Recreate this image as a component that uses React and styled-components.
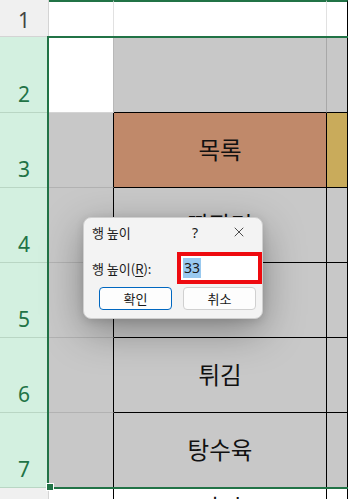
import styled, { createGlobalStyle } from "styled-components";
import { X } from "lucide-react";

const colors = {
  green: "#217346",
  headGray: "#f0f0f0",
  headSel: "#d3f0e0",
  cellGray: "#c8c8c8",
  brown: "#c0896a",
  gold: "#c9ab5b",
  red: "#ee0a0f",
};

const rows = [
  { num: 1, h: 37, sel: false, cells: ["white", "white", "white"] },
  { num: 2, h: 76, sel: true, cells: ["white", "gray", "gray"] },
  { num: 3, h: 75, sel: true, cells: ["gray", "brown", "gold"], text: "목록" },
  { num: 4, h: 75, sel: true, cells: ["gray", "gray", "gray"], text: "짜장면" },
  { num: 5, h: 75, sel: true, cells: ["gray", "gray", "gray"], text: "짬뽕" },
  { num: 6, h: 75, sel: true, cells: ["gray", "gray", "gray"], text: "튀김" },
  { num: 7, h: 75, sel: true, cells: ["gray", "gray", "gray"], text: "탕수육" },
  { num: 8, h: 40, sel: false, cells: ["white", "white", "white"], text: "라면" },
];

const fills = {
  white: "#ffffff",
  gray: colors.cellGray,
  brown: colors.brown,
  gold: colors.gold,
};

export default function App() {
  return (
    <>
      <GlobalStyle />
      <Sheet>
        <Grid $rows={rows.map((r) => `${r.h}px`).join(" ")}>
          {rows.map((r, i) => {
            const boxed = i >= 2;
            return [
              <RowHead key={`h${i}`} $sel={r.sel} $first={i === 0}>
                {r.num}
              </RowHead>,
              <Cell
                key={`a${i}`}
                $bg={fills[r.cells[0]]}
                $top={i === 0}
                $right={boxed ? "#000" : i === 1 ? "#b8b8b8" : "#e1e1e1"}
                $bottom={r.cells[0] === "gray" ? "#b2b2b2" : "#d4d4d4"}
              />,
              <Cell
                key={`b${i}`}
                $bg={fills[r.cells[1]]}
                $top={i === 0}
                $right={boxed ? "#000" : i === 1 ? "#a8a8a8" : "#e1e1e1"}
                $bottom={i >= 1 ? "#000" : "#e1e1e1"}
              >
                {r.text}
              </Cell>,
              <Cell
                key={`c${i}`}
                $bg={fills[r.cells[2]]}
                $top={i === 0}
                $right="#000"
                $bottom={i >= 1 ? "#000" : "#e1e1e1"}
              />,
            ];
          })}
        </Grid>
        <Selection>
          <FillHandle />
        </Selection>

        <Dialog>
          <TitleBar>
            <Title>행 높이</Title>
            <HelpBtn>?</HelpBtn>
            <CloseBtn>
              <X size={16} strokeWidth={1.2} />
            </CloseBtn>
          </TitleBar>
          <FieldRow>
            <Label>
              행 높이(<u>R</u>):
            </Label>
            <RedBox>
              <Input>
                <Selected>33</Selected>
              </Input>
            </RedBox>
          </FieldRow>
          <Buttons>
            <Button $primary>확인</Button>
            <Button>취소</Button>
          </Buttons>
        </Dialog>
      </Sheet>
    </>
  );
}

const GlobalStyle = createGlobalStyle`
  html, body { margin: 0; padding: 0; background: #fff; }
  body {
    font-family: "Noto Sans CJK KR", "Noto Sans", sans-serif;
    width: 348px;
    height: 499px;
    overflow: hidden;
  }
`;

const Sheet = styled.div`
  position: relative;
  width: 348px;
  height: 499px;
  overflow: hidden;
`;

const Grid = styled.div`
  display: grid;
  grid-template-columns: 49px 65px 213px 1fr;
  grid-template-rows: ${(p) => p.$rows};
`;

const RowHead = styled.div`
  box-sizing: border-box;
  display: flex;
  align-items: flex-end;
  justify-content: center;
  padding-bottom: ${(p) => (p.$first ? 4 : 6)}px;
  background: ${(p) => (p.$sel ? colors.headSel : colors.headGray)};
  color: ${(p) => (p.$sel ? colors.green : "#444")};
  border-bottom: 1px solid ${(p) => (p.$sel ? "#b9d6c4" : "#d4d4d4")};
  border-right: 1px solid #d4d4d4;
  font-family: "Noto Sans", "Open Sans", sans-serif;
  font-size: 21px;
  line-height: 24px;
`;

const Cell = styled.div`
  box-sizing: border-box;
  display: flex;
  align-items: center;
  justify-content: center;
  background: ${(p) => p.$bg};
  border-right: 1px solid ${(p) => p.$right};
  border-bottom: 1px solid ${(p) => p.$bottom};
  border-top: ${(p) => (p.$top ? `2px solid ${colors.green}` : "none")};
  font-family: "Noto Sans CJK KR", sans-serif;
  font-size: 23.5px;
  color: #111;
  padding-bottom: 2px;
`;

const Selection = styled.div`
  position: absolute;
  left: 47px;
  top: 36px;
  width: 320px;
  height: 449px;
  border: 2px solid ${colors.green};
  pointer-events: none;
`;

const FillHandle = styled.div`
  position: absolute;
  left: -3px;
  bottom: -4px;
  width: 6px;
  height: 6px;
  background: ${colors.green};
  border: 1px solid #fff;
`;

const Dialog = styled.div`
  position: absolute;
  left: 83px;
  top: 217px;
  width: 180px;
  box-sizing: border-box;
  background: #f3f3f3;
  border: 1px solid #cfcfcf;
  border-radius: 8px;
  box-shadow: 0 12px 40px rgba(0, 0, 0, 0.34), 0 2px 8px rgba(0, 0, 0, 0.12);
  font-family: "Noto Sans CJK KR", sans-serif;
  font-size: 13px;
  color: #1a1a1a;
  padding-bottom: 8px;
`;

const TitleBar = styled.div`
  display: flex;
  align-items: center;
  height: 28px;
  padding: 0 1px 0 8px;
`;

const Title = styled.div`
  flex: 1;
`;

const HelpBtn = styled.div`
  width: 30px;
  text-align: center;
  font-family: "Noto Sans", sans-serif;
  font-size: 14px;
  margin-right: 7px;
`;

const CloseBtn = styled.div`
  width: 44px;
  display: flex;
  justify-content: center;
  color: #222;
`;

const FieldRow = styled.div`
  display: flex;
  align-items: center;
  justify-content: space-between;
  margin-top: 6px;
  padding: 0 0 0 8px;
`;

const Label = styled.div`
  u {
    text-underline-offset: 2px;
  }
`;

const RedBox = styled.div`
  box-sizing: border-box;
  width: 85px;
  height: 32px;
  border: 4px solid ${colors.red};
  background: #fff;
  display: flex;
  align-items: center;
`;

const Input = styled.div`
  flex: 1;
  padding-left: 2px;
  display: flex;
  align-items: center;
`;

const Selected = styled.span`
  background: #99c9ef;
  color: #1a1a1a;
  font-family: "Noto Sans", sans-serif;
  font-size: 14px;
  line-height: 20px;
  padding: 0 1px;
`;

const Buttons = styled.div`
  display: flex;
  gap: 11px;
  padding-left: 15px;
  margin-top: 3px;
`;

const Button = styled.div`
  box-sizing: border-box;
  width: 73px;
  height: 23px;
  display: flex;
  align-items: center;
  justify-content: center;
  background: #fdfdfd;
  border: 1px solid ${(p) => (p.$primary ? "#0067c0" : "#d0d0d0")};
  border-radius: 4px;
  font-size: 13px;
`;
